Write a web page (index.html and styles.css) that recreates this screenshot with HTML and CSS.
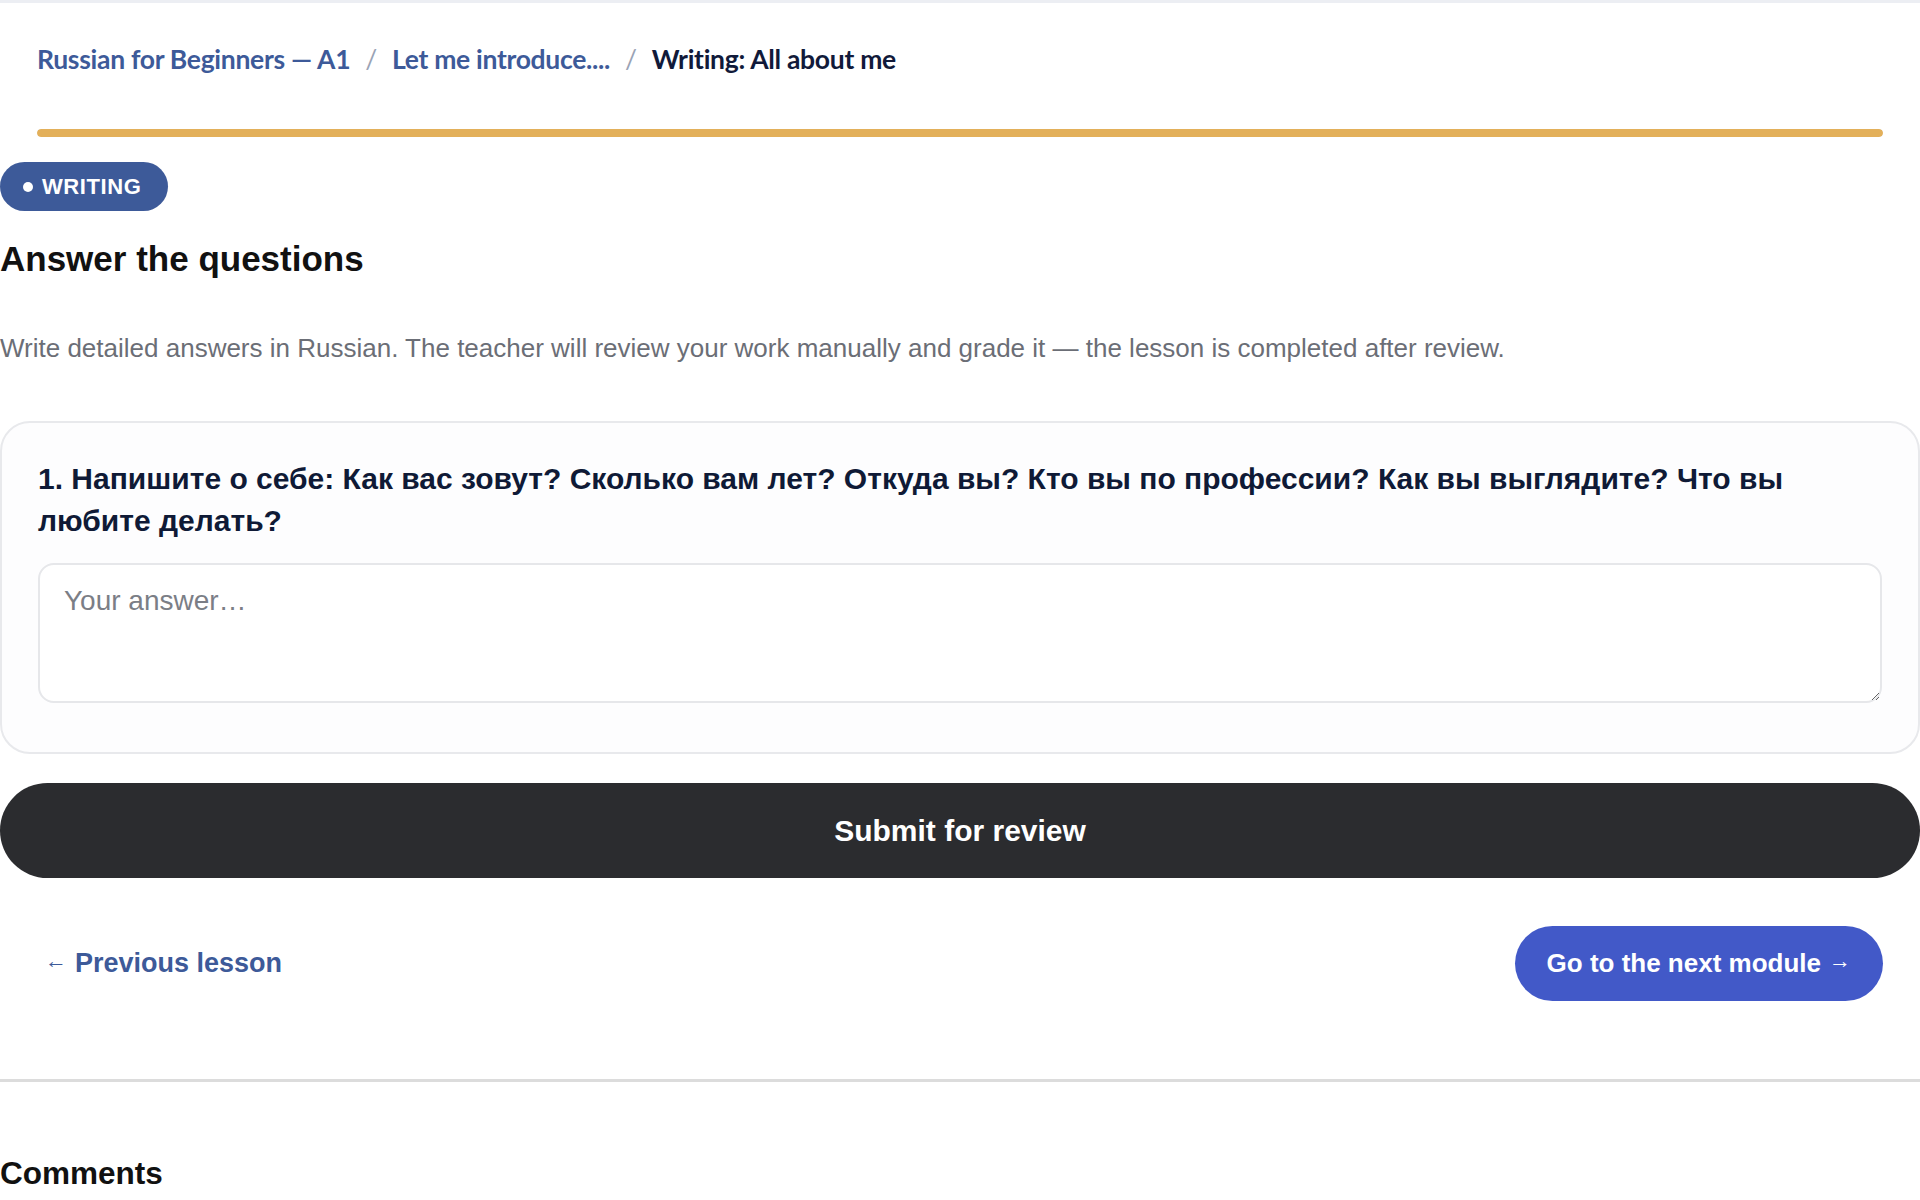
FILE: index.html
```html
<!DOCTYPE html>
<html lang="en">
<head>
<meta charset="utf-8">
<title>Writing: All about me</title>
<link rel="stylesheet" href="styles.css">
</head>
<body>
<div class="topline"></div>
<header class="lesson-header">
  <nav class="crumbs">
    <a class="crumb" href="#">Russian for Beginners — A1</a>
    <span class="sep">/</span>
    <a class="crumb" href="#">Let me introduce....</a>
    <span class="sep">/</span>
    <span class="crumb current">Writing: All about me</span>
  </nav>
  <div class="progress"><div class="progress-fill"></div></div>
</header>
<main class="lesson">
  <span class="badge"><span class="dot"></span>WRITING</span>
  <h1 class="title">Answer the questions</h1>
  <p class="intro">Write detailed answers in Russian. The teacher will review your work manually and grade it — the lesson is completed after review.</p>
  <section class="card">
    <h2 class="question">1. Напишите о себе: Как вас зовут? Сколько вам лет? Откуда вы? Кто вы по профессии? Как вы выглядите? Что вы любите делать?</h2>
    <textarea class="answer" placeholder="Your answer…"></textarea>
  </section>
  <button class="submit">Submit for review</button>
  <div class="pager">
    <a class="prev" href="#"><span class="arrow">←</span> Previous lesson</a>
    <a class="next" href="#">Go to the next module <span class="arrow">→</span></a>
  </div>
  <hr class="divider">
  <h2 class="comments">Comments</h2>
</main>
</body>
</html>
```
FILE: styles.css
```css
* { box-sizing: border-box; }
html, body { margin: 0; padding: 0; background: #fff; }
body { font-family: "Liberation Sans", Arial, sans-serif; color: #111; overflow: hidden; }

.topline { height: 3px; background: #eceef3; }

.lesson-header { padding: 0 37px; }
.crumbs {
  display: flex; align-items: center; gap: 15px;
  padding-top: 34px; height: 78px;
  font-family: Lato, "Liberation Sans", sans-serif;
  font-weight: 700; font-size: 26.5px; letter-spacing: -0.3px;
}
.crumb { color: #3d5a99; text-decoration: none; }
.crumb.current { color: #111a3a; }
.sep { color: #9aa3b5; font-weight: 400; }

.progress { margin-top: 48px; height: 8px; border-radius: 4px; background: #eef0f4; overflow: hidden; }
.progress-fill { height: 100%; width: 100%; background: #e3b05a; border-radius: 4px; }

.lesson { padding: 0; }
.badge {
  display: inline-flex; align-items: center; gap: 9px;
  margin-top: 25px; height: 49px; padding: 0 26px 0 23px;
  background: #3d5a99; color: #fff; border-radius: 25px;
  font-weight: 700; font-size: 22px; letter-spacing: 0.6px;
}
.dot { width: 10px; height: 10px; border-radius: 50%; background: #fff; }

.title { margin: 27px 0 0; font-size: 35px; line-height: 42px; font-weight: 700; color: #111; }
.intro { margin: 52px 0 0; font-size: 26px; line-height: 32px; color: #6b6e76; }

.card {
  margin-top: 57px; border: 2px solid #e8e9ec; border-radius: 30px;
  padding: 35px 36px 49px; background: #fdfdfe;
}
.question { margin: 0; font-size: 30px; line-height: 42px; font-weight: 700; color: #0f1a36; }
.answer {
  display: block; width: 100%; height: 140px; margin-top: 21px;
  border: 2px solid #e6e7ea; border-radius: 16px; padding: 20px 24px;
  font-family: "Liberation Sans", Arial, sans-serif; font-size: 28px; color: #222; background: #fff;
  resize: vertical; outline: none;
}
.answer::placeholder { color: #7b7e86; }

.submit {
  display: block; width: 100%; height: 95px; margin-top: 29px;
  border: 0; border-radius: 48px; background: #2b2c2f; color: #fff;
  font-family: "Liberation Sans", Arial, sans-serif; font-size: 30px; font-weight: 700;
}

.pager {
  display: flex; justify-content: space-between; align-items: center;
  padding: 0 37px 0 45px; margin-top: 48px;
}
.prev { color: #3d5a99; text-decoration: none; font-weight: 700; font-size: 27px; display: inline-flex; align-items: center; gap: 8px; }
.prev .arrow { font-weight: 400; font-size: 22px; transform: translateY(-3px); }
.next {
  display: inline-flex; align-items: center; height: 75px; padding: 0 32px;
  background: #4259c8; color: #fff; border-radius: 38px; text-decoration: none;
  font-weight: 700; font-size: 26px;
}
.next .arrow { font-weight: 400; font-size: 22px; margin-left: 8px; transform: translateY(-3px); }

.divider { margin: 78px 0 0; border: 0; height: 3px; background: #dcdcdc; }
.comments { margin: 73px 0 0; font-size: 31.5px; font-weight: 700; color: #111; }
```
